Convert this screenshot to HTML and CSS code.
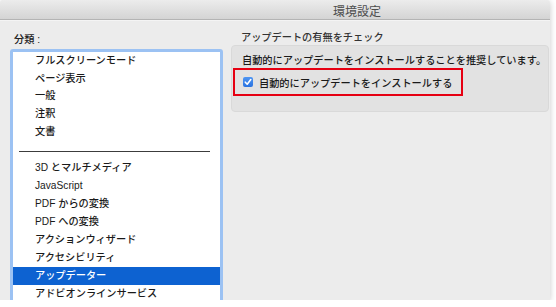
FILE: index.html
```html
<!DOCTYPE html>
<html lang="ja">
<head>
  <meta charset="UTF-8" />
  <title>環境設定</title>
  <link rel="stylesheet" href="styles.css">
</head>
<body>
  <div class="window">
    <header class="titlebar">環境設定</header>

    <div class="content">
      <aside class="sidebar">
        <div class="sidebar-label">分類 :</div>
        <ul class="category-list">
          <li class="item short">フルスクリーンモード</li>
          <li class="item short">ページ表示</li>
          <li class="item short">一般</li>
          <li class="item short">注釈</li>
          <li class="item short">文書</li>
          <li class="separator"></li>
          <li class="item">3D とマルチメディア</li>
          <li class="item">JavaScript</li>
          <li class="item">PDF からの変換</li>
          <li class="item">PDF への変換</li>
          <li class="item">アクションウィザード</li>
          <li class="item">アクセシビリティ</li>
          <li class="item selected">アップデーター</li>
          <li class="item">アドビオンラインサービス</li>
        </ul>
      </aside>

      <section class="pane">
        <h2 class="pane-title">アップデートの有無をチェック</h2>
        <div class="group">
          <p class="group-text">自動的にアップデートをインストールすることを推奨しています。</p>
          <label class="highlight">
            <span class="checkbox">
              <svg width="10" height="10" viewBox="0 0 10 10">
                <path d="M2.3 5.2 L4.2 7.2 L7.8 2.6" fill="none" stroke="#fff" stroke-width="1.6" stroke-linecap="round" stroke-linejoin="round"/>
              </svg>
            </span>
            自動的にアップデートをインストールする
          </label>
        </div>
      </section>
    </div>
  </div>
</body>
</html>
```

FILE: styles.css
```css
:root {
  --window-bg: #ececec;
  --group-bg: #e2e2e2;
  --text-color: #1a1a1a;
  --select-bg: #0d62d1;
  --focus-ring: #9cc2f3;
}

body {
  margin: 0;
  background: #fff;
  font-family: 'Liberation Sans', 'Noto Sans CJK JP', sans-serif;
  font-size: 10.2px;
  font-weight: 500;
  color: var(--text-color);
}

.window {
  width: 550px;
  height: 300px;
  background: var(--window-bg);
  box-shadow: 0 1px 6px rgba(0, 0, 0, 0.22);
  border-radius: 4px 4px 0 0;
  overflow: hidden;
}

.titlebar {
  height: 20px;
  padding: 2px 0 0 164px;
  box-sizing: border-box;
  line-height: 20px;
  text-align: center;
  font-size: 12px;
  font-weight: normal;
  color: #4d4d4d;
  background: linear-gradient(#ececec, #d4d4d4);
  border-bottom: 1px solid #b4b4b4;
  box-shadow: 0 1px 0 #f4f4f4;
}

.content {
  display: flex;
}

.sidebar {
  width: 213px;
  margin-left: 10px;
}

.sidebar-label {
  margin-top: 13px;
  margin-bottom: 2px;
  padding-left: 4px;
  line-height: 14px;
  color: #222;
}

.category-list {
  list-style: none;
  margin: 0;
  padding: 0;
  height: 260px;
  background: #fff;
  border: 3px solid var(--focus-ring);
  border-radius: 3px;
}

.item {
  padding-left: 22px;
  line-height: 18px;
  white-space: nowrap;
}

.item.short {
  line-height: 17.7px;
}

.item.selected {
  background: var(--select-bg);
  color: #fff;
}

.separator {
  height: 1px;
  margin: 10px 10px 7px 6px;
  background: #3c3c3c;
}

.pane {
  flex: 1;
  margin-left: 8px;
}

.pane-title {
  margin: 11px 0 0 10px;
  font-size: 10.2px;
  font-weight: 500;
  line-height: 14px;
  color: #333;
}

.group {
  height: 67px;
  margin-right: 1px;
  padding: 8px 0 0 10px;
  box-sizing: border-box;
  background: var(--group-bg);
  border: 1px solid #d9d9d9;
  border-radius: 4px;
}

.group-text {
  margin: 0;
  line-height: 14px;
  white-space: nowrap;
}

.highlight {
  display: flex;
  align-items: center;
  gap: 6px;
  width: 230px;
  height: 28px;
  margin-left: -9px;
  padding-left: 8px;
  box-sizing: border-box;
  border: 2px solid #e60012;
}

.checkbox {
  display: flex;
  width: 10px;
  height: 10px;
  border-radius: 2px;
  background: linear-gradient(#4e95f2, #2a73e0);
}
```
